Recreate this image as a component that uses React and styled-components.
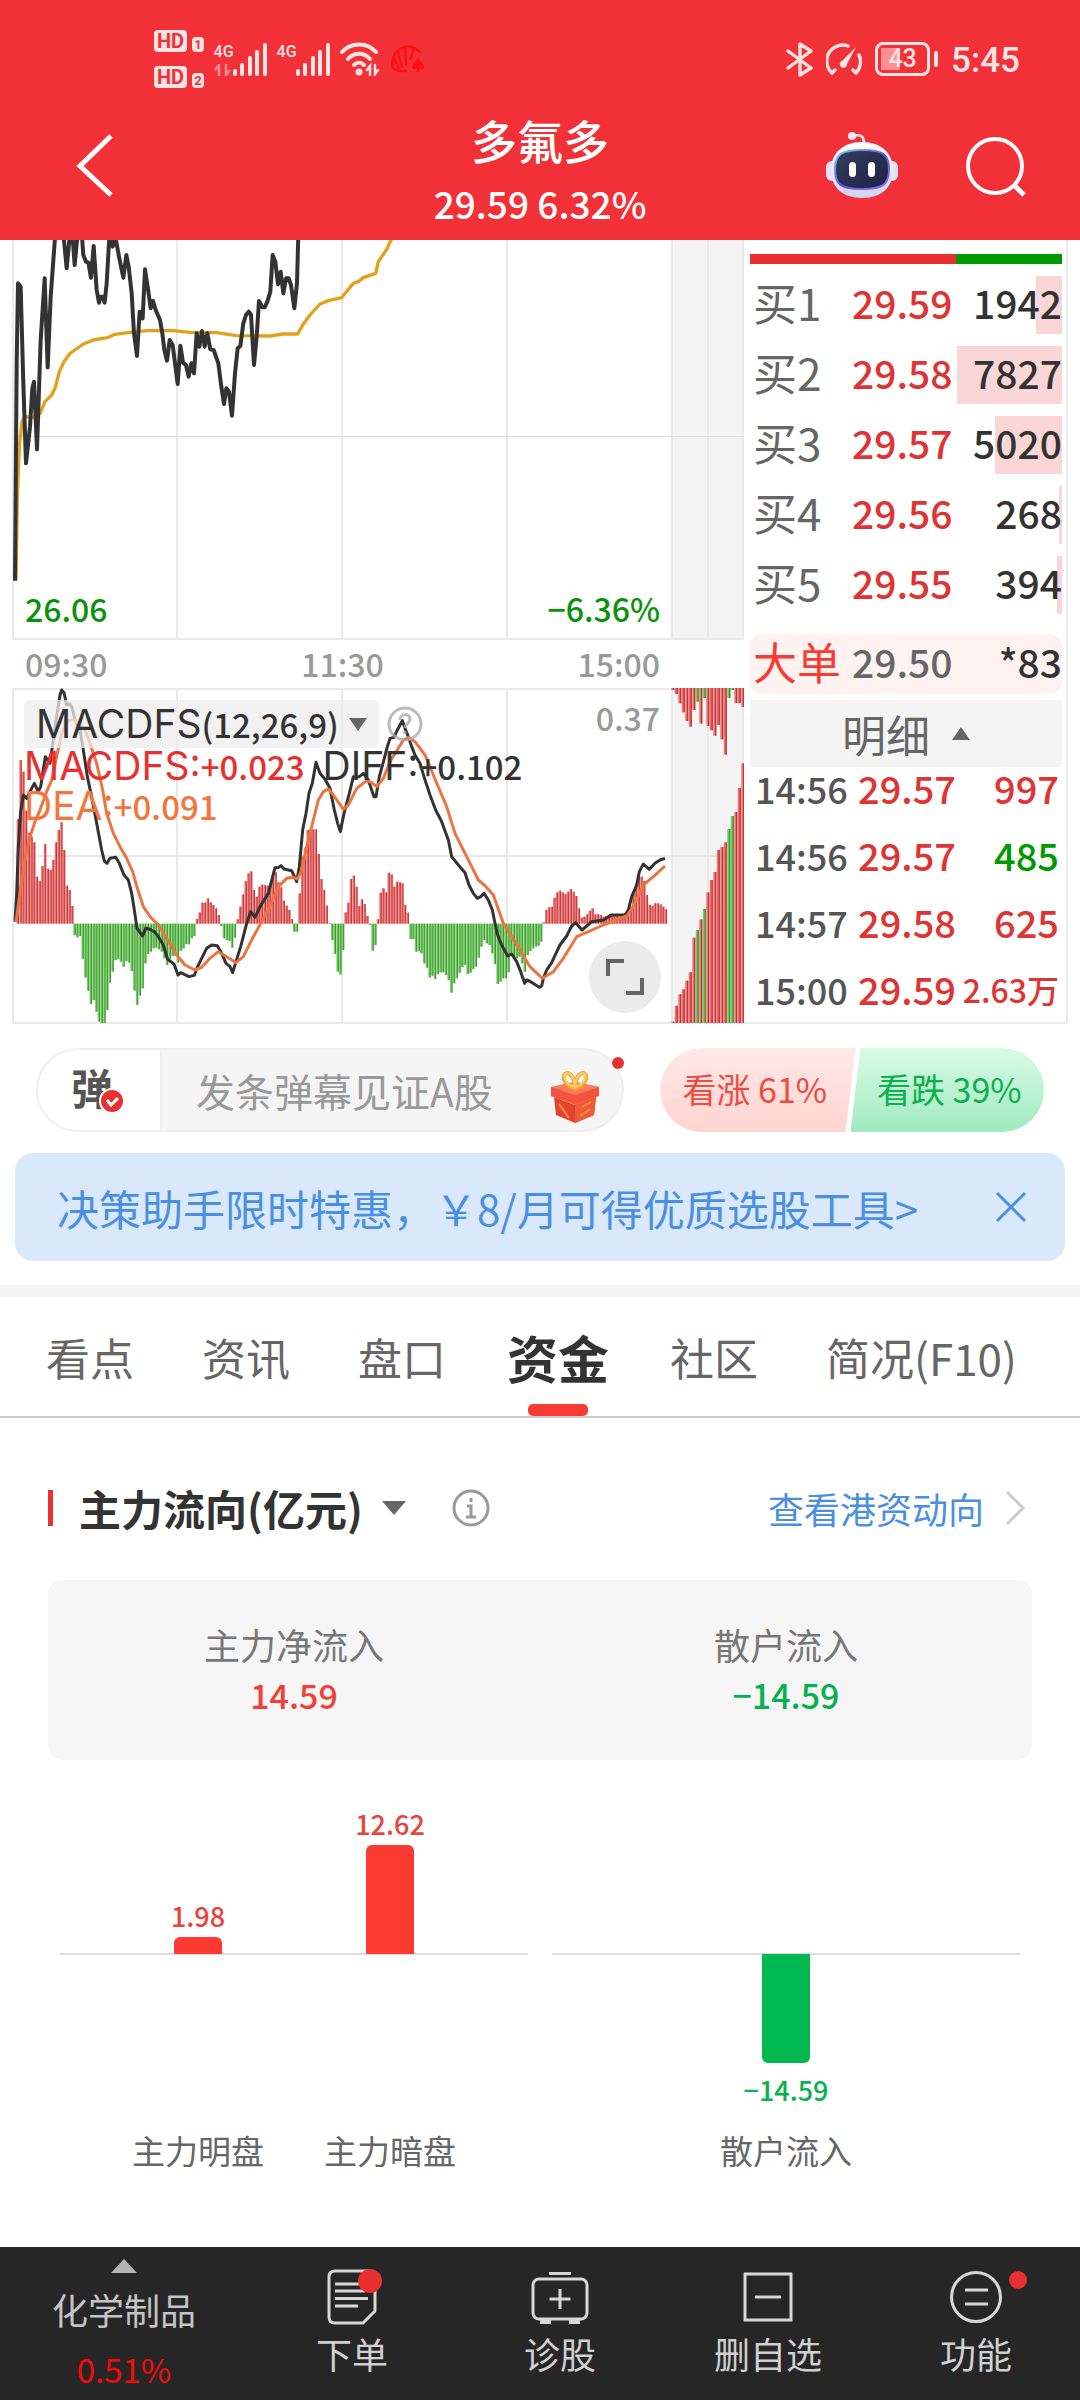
import React from "react";
import styled, { createGlobalStyle } from "styled-components";

const RED = "#e93030";
const GREEN = "#009900";
const NUM = `"Noto Sans CJK SC", "Noto Sans", sans-serif`;

const Global = createGlobalStyle`
  * { box-sizing: border-box; }
  body { margin: 0; background: #fff; }
  button, input { font: inherit; color: inherit; border: 0; background: none; padding: 0; margin: 0; }
  button { cursor: pointer; }
  a { text-decoration: none; }
  svg { display: block; }
  h1, h2, p { margin: 0; font-weight: inherit; font-size: inherit; }
`;

const Page = styled.div`
  min-height: 100vh;
  display: flex;
  flex-direction: column;
  font-family: ${NUM};
  color: #333;
`;

/* ---------- header ---------- */
const Header = styled.header`
  background: #f23038;
  color: #fff;
`;
const StatusBar = styled.div`
  display: flex;
  justify-content: space-between;
  align-items: center;
  height: 112px;
  padding: 6px 60px 0 154px;
  color: #ffe4e4;
`;
const StatusGroup = styled.div`
  display: flex;
  align-items: center;
  gap: ${(p) => p.$gap}px;
`;
const HdStack = styled.div`
  display: flex;
  flex-direction: column;
  gap: 14px;
`;
const HdRow = styled.div`
  display: flex;
  align-items: flex-end;
  gap: 5px;
`;
const HdBox = styled.span`
  background: #ffe4e4;
  color: #f23038;
  border-radius: 4px;
  font: 700 ${(p) => p.$size}px/${(p) => p.$size + 2}px Roboto, sans-serif;
  padding: 0 ${(p) => (p.$size > 15 ? 3 : 2)}px;
`;
const Signal = styled.div`
  display: grid;
  grid-template-columns: 19px 34px;
  align-items: end;
`;
const SignalKind = styled.div`
  display: flex;
  flex-direction: column;
  justify-content: space-between;
  align-self: stretch;
  font: 500 16px/18px Roboto, sans-serif;
`;
const Clock = styled.time`
  font: 500 35px/40px Roboto, sans-serif;
  padding-top: 3px;
`;
const BatteryBox = styled.div`
  display: flex;
  align-items: center;
  gap: 4px;
  &::after { content: ""; width: 4px; height: 16px; border-radius: 2px; background: #ffe4e4; }
`;
const BatteryBody = styled.div`
  width: 55px;
  height: 34px;
  border: 3px solid #ffe4e4;
  border-radius: 8px;
  text-align: center;
  font: 500 25px/28px Roboto, sans-serif;
  background: linear-gradient(90deg, #ff8f93 45%, transparent 45%) 3px 3px / 43px 22px no-repeat;
`;
const TitleBar = styled.div`
  display: grid;
  grid-template: 100% / 1fr auto 1fr;
  align-items: center;
  height: 128px;
  padding: 0 52px 22px;
`;
const TitleText = styled.div`
  display: flex;
  flex-direction: column;
  align-items: center;
  align-self: start;
`;
const StockName = styled.h1`
  font-size: 46px;
  font-weight: 500;
  line-height: 54px;
`;
const StockQuote = styled.p`
  font-size: 37px;
  font-weight: 500;
  line-height: 74px;
`;
const Actions = styled.div`
  display: flex;
  justify-content: flex-end;
  align-items: center;
  gap: 64px;
`;
const IconButton = styled.button`
  display: flex;
  justify-content: center;
  align-items: center;
`;
const BackButton = styled(IconButton)`
  justify-self: start;
  padding-left: 22px;
`;

/* ---------- market panel ---------- */
const Market = styled.section`
  display: grid;
  grid-template-columns: 732fr 324fr;
  padding: 0 12px;
`;
const ChartColumn = styled.div`
  min-width: 0;
`;
const Plot = styled.div`
  position: relative;
  svg { width: 100%; height: auto; }
`;
const PlotLabel = styled.span`
  position: absolute;
  ${(p) => (p.$right ? "right: 84px;" : "left: 13px;")}
  ${(p) => (p.$top ? "top: 5px;" : "bottom: 8px;")}
  font-size: 32px;
  line-height: 48px;
  font-weight: 500;
  color: ${(p) => p.$color};
`;
const TimeAxis = styled.div`
  display: flex;
  justify-content: space-between;
  padding: 0 84px 2px 13px;
  font-size: 32px;
  font-weight: 500;
  line-height: 46px;
  color: #999;
`;
const Indicators = styled.div`
  position: absolute;
  top: 12px;
  left: 12px;
  font-size: 33px;
  font-weight: 500;
  line-height: 36px;
`;
const IndicatorHead = styled.div`
  display: flex;
  align-items: center;
  gap: 8px;
  height: 48px;
`;
const IndicatorPick = styled.button`
  display: flex;
  align-items: center;
  gap: 10px;
  height: 48px;
  padding: 0 12px;
  border-radius: 6px;
  background: rgba(238, 238, 238, 0.75);
`;
const IndicatorName = styled.span`
  display: flex;
`;
const Latin = styled.span`
  font-family: Inter, Roboto, sans-serif;
  font-weight: 400;
  font-size: 39px;
`;
const ReadingRow = styled.div`
  display: flex;
  gap: 18px;
  margin-bottom: 4px;
  height: 36px;
`;
const Reading = styled.span`
  display: flex;
  color: ${(p) => p.$color};
`;
const Expand = styled.button`
  position: absolute;
  right: 83px;
  bottom: 11px;
  width: 72px;
  height: 72px;
  border-radius: 50%;
  background: #ebebeb;
  display: grid;
  place-items: center;
  svg { width: 38px; }
`;

const Book = styled.div`
  border: solid #ececec;
  border-width: 0 2px 2px 0;
  padding: 14px 4px 0 6px;
  min-width: 0;
`;
const Ratio = styled.div`
  height: 10px;
  margin-bottom: 6px;
  background: linear-gradient(90deg, ${RED} 66%, ${GREEN} 66%);
`;
const BookTable = styled.table`
  width: 100%;
  border-collapse: collapse;
  table-layout: fixed;
  td { padding: 0; white-space: nowrap; }
`;
const BidRow = styled.tr`
  height: 70px;
  font-size: 39px;
  line-height: 58px;
  && td { padding-bottom: 6px; }
`;
const Label = styled.td`
  width: 102px;
  text-indent: 3px;
  font-size: 44px;
  color: #666;
`;
const Price = styled.td`
  width: 102px;
  color: #df3434;
  font-weight: 500;
`;
const Volume = styled.td`
  text-align: right;
  font-weight: 500;
  background: linear-gradient(#fad6d6, #fad6d6) right 6px / ${(p) => p.$bar || 0}px 58px no-repeat;
`;
const BigOrder = styled.div`
  display: grid;
  grid-template-columns: 102px 102px 1fr;
  margin-top: 14px;
  height: 60px;
  line-height: 54px;
  border-radius: 12px;
  background: #fff3f2;
  font-size: 44px;
  text-indent: 3px;
  color: #fa3b32;
`;
const BigPrice = styled.span`
  color: #666;
  text-indent: 0;
  font-size: 39px;
  font-weight: 500;
`;
const BigVolume = styled.span`
  color: #333;
  font-size: 39px;
  font-weight: 500;
  text-align: right;
`;
const DetailHead = styled.button`
  display: flex;
  width: 100%;
  height: 67px;
  margin-top: 6px;
  align-items: center;
  justify-content: center;
  gap: 22px;
  background: #f4f4f4;
  color: #666;
  font-size: 44px;
  line-height: 60px;
`;
const TradeRow = styled.tr`
  font-size: 38px;
  line-height: 42px;
  && td { padding-bottom: 25px; }
  &&:last-child td { padding-bottom: 12px; }
`;
const TradeTime = styled.td`
  width: 108px;
  text-indent: 5px;
  color: #555;
  font-size: 36px;
  font-weight: 500;
`;
const TradeVolume = styled.td`
  text-align: right;
  font-weight: 500;
  font-size: ${(p) => (p.$small ? 32 : 38)}px;
  color: ${(p) => (p.$down ? GREEN : "#df3434")};
  && { padding-right: 3px; }
`;

/* ---------- comment + vote ---------- */
const SocialRow = styled.section`
  display: flex;
  gap: 36px;
  padding: 24px 36px 21px;
  height: 129px;
`;
const CommentBox = styled.div`
  position: relative;
  flex: 588 588 588px;
  min-width: 0;
  display: flex;
  border: 2px solid #eee;
  border-radius: 42px;
  background: #f5f5f5;
`;
const BulletToggle = styled.button`
  position: relative;
  width: 124px;
  border-right: 2px solid #eee;
  border-radius: 40px 0 0 40px;
  background: #fff;
  color: #555;
  font-size: 42px;
  font-weight: 700;
  line-height: 74px;
  padding: 0 14px 6px 0;
  svg { position: absolute; left: 61px; top: 38px; }
`;
const CommentInput = styled.input`
  flex: 1;
  width: 0;
  min-width: 0;
  padding-left: 34px;
  font-size: 39px;
  outline: 0;
  &::placeholder { color: #999; opacity: 1; }
`;
const GiftButton = styled.button`
  padding: 14px 22px 0 0;
`;
const Dot = styled.i`
  position: absolute;
  top: ${(p) => p.$top}px;
  right: ${(p) => p.$right}px;
  width: ${(p) => p.$size}px;
  height: ${(p) => p.$size}px;
  border-radius: 50%;
  background: ${RED};
`;
const Votes = styled.div`
  flex: 384 384 384px;
  display: flex;
  border-radius: 42px;
  overflow: hidden;
`;
const Vote = styled.button`
  flex: 1;
  white-space: nowrap;
  font-size: 34px;
  color: ${(p) => (p.$up ? "#ee4b41" : "#0cb04d")};
  background: ${(p) => (p.$up ? "linear-gradient(#ffe9e8, #ffd4cf)" : "linear-gradient(#d9fae6, #9feac0)")};
  clip-path: ${(p) =>
    p.$up ? "polygon(0 0, 100% 0, calc(100% - 10px) 100%, 0 100%)" : "polygon(10px 0, 100% 0, 100% 100%, 0 100%)"};
  margin-right: ${(p) => (p.$up ? "-5px" : 0)};
  padding: ${(p) => (p.$up ? "0 6px 4px 0" : "0 0 4px 4px")};
`;
const Banner = styled.div`
  display: flex;
  align-items: center;
  justify-content: space-between;
  height: 108px;
  margin: 0 15px 24px;
  padding: 0 38px 0 42px;
  border-radius: 18px;
  background: #dae8fc;
`;
const BannerLink = styled.a`
  color: #4a90e2;
  font-size: 42px;
  white-space: nowrap;
`;

/* ---------- tabs ---------- */
const Tabs = styled.nav`
  display: flex;
  border-top: 12px solid #f4f4f4;
  border-bottom: 2px solid #ccc;
  height: 133px;
  padding-left: 12px;
`;
const Tab = styled.button`
  position: relative;
  padding: 0 ${(p) => (p.$active ? 27 : 34)}px;
  font-size: ${(p) => (p.$active ? 51 : 44)}px;
  font-weight: ${(p) => (p.$active ? 700 : 400)};
  color: ${(p) => (p.$active ? "#333" : "#666")};
  white-space: nowrap;
  &::after {
    content: "";
    display: ${(p) => (p.$active ? "block" : "none")};
    position: absolute;
    left: calc(50% - 30px);
    bottom: 0;
    width: 60px;
    height: 12px;
    border-radius: 5px;
    background: #fa3b32;
  }
`;

/* ---------- fund flow ---------- */
const Flow = styled.section`
  padding: 60px 48px 40px;
`;
const FlowHead = styled.div`
  display: flex;
  align-items: center;
  height: 60px;
`;
const FlowTitle = styled.h2`
  display: flex;
  align-items: center;
  gap: 26px;
  font-size: 42px;
  line-height: 60px;
  font-weight: 700;
  &::before { content: ""; width: 5px; height: 36px; background: ${RED}; }
`;
const HeadButton = styled(IconButton)`
  margin-left: ${(p) => p.$gap}px;
`;
const MoreLink = styled.a`
  display: flex;
  align-items: center;
  gap: 20px;
  margin-left: auto;
  padding-right: 6px;
  font-size: 36px;
  color: #4a90e2;
`;
const Summary = styled.dl`
  display: grid;
  grid-template-columns: 1fr 1fr;
  margin: 42px 0 0;
  padding: 37px 0 36px;
  height: 180px;
  border-radius: 14px;
  background: #f6f6f6;
  text-align: center;
`;
const SummaryName = styled.dt`
  font-size: 36px;
  line-height: 54px;
  color: #777;
`;
const SummaryValue = styled.dd`
  margin: 0;
  font-size: 34px;
  line-height: 48px;
  font-weight: 500;
  color: ${(p) => (p.$down ? "#07b151" : "#f33f37")};
`;
const BarCharts = styled.div`
  display: grid;
  grid-template-columns: 1fr 1fr;
  gap: 24px;
  padding: 40px 12px 0;
`;
const BarGroup = styled.div`
  display: flex;
  justify-content: center;
  background: linear-gradient(#ddd, #ddd) 0 153px / 100% 2px no-repeat;
`;
const BarColumn = styled.div`
  display: flex;
  flex-direction: column;
  align-items: center;
  flex: 0 1 192px;
`;
const BarArea = styled.div`
  display: flex;
  flex-direction: column;
  align-items: center;
  justify-content: ${(p) => (p.$below ? "flex-start" : "flex-end")};
  height: ${(p) => (p.$below ? 168 : 154)}px;
`;
const Bar = styled.div`
  width: 48px;
  background: ${(p) => (p.$down ? "#00b850" : "#fd3a32")};
  border-radius: ${(p) => (p.$down ? "0 0 6px 6px" : "6px 6px 0 0")};
`;
const BarValue = styled.span`
  font-size: 27px;
  line-height: 42px;
  padding-top: ${(p) => (p.$down ? 6 : 0)}px;
  font-weight: 500;
  color: ${(p) => (p.$down ? "#07b151" : "#e8443b")};
`;
const BarName = styled.span`
  font-size: 33px;
  line-height: 56px;
  color: #666;
`;

/* ---------- bottom bar ---------- */
const BottomBar = styled.nav`
  display: grid;
  grid-template-columns: 248fr 208fr 208fr 208fr 208fr;
  height: 153px;
  margin-top: auto;
  background: #262626;
  color: #d0d0d0;
  font-size: 36px;
`;
const Sector = styled.button`
  display: flex;
  flex-direction: column;
  align-items: center;
  padding-top: 12px;
  line-height: 60px;
  color: #c4c4c4;
  svg { margin-bottom: 6px; }
`;
const Change = styled.span`
  font-size: 33px;
  color: #f50a0a;
`;
const NavItem = styled.button`
  position: relative;
  display: flex;
  flex-direction: column;
  align-items: center;
  padding-top: 22px;
  line-height: 56px;
`;

/* ---------- data ---------- */
const priceLine =
  "45,1052 50,400 54,160 62,170 70,460 78,700 90,590 97,475 102,455 111,658 122,330 134,145 143,412 152,200 166,10 190,10 200,115 210,10 217,10 224,105 233,10 246,20 250,75 258,95 265,98 273,143 281,48 290,180 297,218 303,200 308,200 314,218 320,160 328,20 338,50 346,20 358,85 370,143 379,75 386,110 395,190 402,310 411,378 419,245 428,265 435,118 443,170 452,235 459,213 467,240 480,270 487,310 493,360 501,392 509,330 518,345 533,462 541,347 549,398 558,405 566,440 574,400 582,430 590,310 598,350 606,303 614,350 622,310 631,358 641,360 655,400 664,470 672,522 679,475 687,485 696,557 705,430 713,355 721,348 730,280 738,255 746,245 753,255 762,405 770,320 777,213 787,232 794,232 802,215 811,185 818,75 826,95 834,163 842,125 850,190 858,145 866,145 873,165 883,235 891,160 895,10";
const averageLine =
  "48,1050 52,800 58,650 66,575 75,560 100,562 120,550 135,515 155,495 165,475 178,425 192,395 210,370 250,342 280,330 322,323 345,313 390,307 440,302 520,302 570,307 650,308 710,317 810,318 850,312 893,312 908,285 930,255 960,222 985,212 1025,203 1045,178 1060,160 1075,155 1090,143 1127,130 1135,95 1160,58 1178,20";
const diffLine =
  "45,725 50,640 55,500 62,395 70,345 80,355 95,325 103,310 115,335 122,320 136,230 150,250 160,180 170,110 180,45 185,30 192,38 200,75 210,72 217,85 225,120 240,150 250,210 262,290 275,350 290,430 305,510 313,543 321,550 330,535 347,532 358,550 372,585 385,600 395,640 403,690 411,745 428,768 437,745 450,748 463,755 475,770 490,795 503,838 522,852 534,885 542,878 567,890 583,886 592,862 605,835 620,805 635,795 652,797 665,820 678,850 690,860 698,878 708,845 722,800 740,730 752,695 765,712 780,680 805,640 825,563 835,563 843,557 852,567 875,572 890,605 898,560 908,450 918,400 927,340 937,310 948,247 960,280 975,298 990,325 1003,390 1013,430 1021,455 1032,400 1048,340 1060,290 1078,290 1090,280 1105,300 1115,330 1122,350 1128,350 1138,290 1153,235 1162,200 1170,175 1182,172 1192,150 1207,122 1215,145 1225,170 1235,200 1245,225 1260,250 1272,290 1290,345 1307,390 1325,425 1345,480 1355,530 1375,555 1395,578 1407,615 1420,640 1432,655 1442,650 1452,640 1465,660 1477,690 1487,740 1493,765 1505,795 1523,828 1535,822 1550,845 1562,875 1574,910 1580,900 1588,903 1618,922 1625,918 1630,895 1640,870 1655,848 1668,820 1680,795 1700,768 1715,738 1727,728 1746,750 1760,738 1775,725 1790,723 1810,720 1835,705 1875,705 1885,690 1895,650 1910,615 1918,575 1930,552 1948,568 1965,550 1980,540 1995,535";
const deaLine =
  "48,725 60,640 75,540 90,470 105,425 118,395 140,335 155,300 170,230 185,160 200,125 220,118 235,130 255,150 270,190 290,250 308,330 320,400 340,460 360,500 380,535 398,575 412,625 430,680 450,710 475,735 500,775 530,825 555,855 585,870 605,862 630,835 655,815 680,830 708,848 730,830 760,770 785,725 810,680 835,620 860,595 880,592 893,597 905,570 920,500 940,420 955,360 970,335 985,327 1000,345 1030,388 1045,375 1070,325 1100,302 1115,308 1130,320 1150,295 1170,245 1210,180 1225,172 1245,185 1275,225 1300,285 1340,380 1365,460 1400,530 1435,600 1455,617 1480,645 1510,730 1560,810 1590,860 1627,895 1660,875 1690,835 1730,770 1760,757 1810,735 1880,708 1900,680 1930,615 1960,590 1995,558";

/* histogram runs: [first x, bar ends]; the zero line is y = 731 */
const macdRuns = [
  [54, [417, 240, 275, 392, 458, 470, 487, 590, 603, 558, 492, 566, 570, 540, 487, 450, 427, 510, 617, 630, 678]],
  [224, [765, 772, 768, 837, 893, 932, 972, 960, 995, 1025, 1029, 1029, 990, 908, 875, 840, 837, 845, 860, 843, 848, 873, 932, 975, 947, 925, 850, 822, 815, 805, 803, 808, 815, 835, 855, 838, 828, 828, 848, 812, 805, 792, 793, 775, 768]],
  [591, [717, 697, 668, 668, 655, 667, 675, 685, 705]],
  [664, [738, 775, 780, 783, 803, 773]],
  [713, [718, 680, 643, 603, 580, 574, 630, 650, 620, 614, 615, 617, 617, 590, 577, 607, 622, 662, 677, 690, 717]],
  [883, [755, 755]],
  [899, [640, 530, 503, 450, 448, 448, 448, 522, 597, 630, 677, 729]],
  [997, [780, 822, 875, 883, 810]],
  [1037, [697, 668, 597, 587, 620, 678, 658, 672, 708]],
  [1110, [735, 812, 795]],
  [1134, [718, 638, 625, 637, 578, 583, 620, 605, 607, 610, 675, 698]],
  [1232, [777, 777, 815, 813, 820, 850, 863, 893, 887, 897, 882, 877, 877, 885, 900, 938, 910, 895, 878, 862, 855, 882, 878, 867, 860, 833, 800, 780, 790, 795, 820, 852, 912, 905, 895, 895, 877, 825, 830, 835, 830, 850, 875, 825, 813, 805, 800, 797, 785]],
  [1631, [727, 690, 682, 680, 653, 637, 632, 637, 642, 635, 627, 635, 648, 685, 713, 710, 703, 692, 685, 703, 703, 705, 710, 708, 703, 703, 703, 705, 710, 710, 700, 695, 680, 640, 610, 590, 590, 603, 645, 675, 677, 670, 670, 673, 680, 688]],
];
const auctionTop = [30, 42, 70, 97, 123, 140, 90, -65, 131, -54, 138, 151, 167, 135, 178, 224, -54, -30, 69, 69, 81];
const auctionBottom = [1025, 977, 943, 928, 902, 877, 773, -750, 718, -687, 637, 600, 576, 510, 501, 487, -447, -408, 396, 324, 250];

const bids = [
  ["买1", "29.59", "1942", 26],
  ["买2", "29.58", "7827", 105],
  ["买3", "29.57", "5020", 67],
  ["买4", "29.56", "268", 3],
  ["买5", "29.55", "394", 5],
];
const trades = [
  ["14:56", "29.57", "997"],
  ["14:56", "29.57", "485", true],
  ["14:57", "29.58", "625"],
  ["15:00", "29.59", "2.63万"],
];

/* ---------- drawings ---------- */
const Stick = ({ x, y1, y2, up, w = 8 }) => {
  const top = Math.min(y1, y2);
  const h = Math.abs(y2 - y1);
  return (
    <>
      <rect x={x - w / 2} y={top} width={w - 1} height={h} fill={up ? "#f76c6c" : "#74ca66"} />
      <rect x={x} y={top} width={w / 2 - 1} height={h} fill={up ? "#b23c3c" : "#3b952b"} />
    </>
  );
};

const Grid = ({ top, mid, bottom }) => (
  <>
    <rect x="2012" y={top} width="220" height={bottom - top} fill="#f4f4f4" />
    <g stroke="#e9e9e9" strokeWidth="6">
      {[39, 531, 1026, 1521, 2016, 2124, 2229].map((x) => (
        <path key={x} d={`M${x} ${top}V${bottom}`} />
      ))}
      <path d={`M36 ${bottom}H2232`} />
    </g>
    <path d={`M36 ${mid}H2232`} stroke="#e2e2e2" strokeWidth="4" />
  </>
);

const PriceChart = () => (
  <svg viewBox="36 30 2196 1200" fill="none" strokeLinejoin="round">
    <Grid top={0} mid={619} bottom={1227} />
    <polyline points={averageLine} stroke="#e2a01c" strokeWidth="10" />
    <polyline points={priceLine} stroke="#333" strokeWidth="12" />
  </svg>
);

const MacdChart = () => (
  <svg viewBox="36 24 2196 1008" fill="none" strokeLinejoin="round">
    <Grid top={27} mid={528} bottom={1029} />
    <path d="M36 27H2232" stroke="#e9e9e9" strokeWidth="6" />
    {macdRuns.map(([start, ends]) =>
      ends.map((y, i) => <Stick key={start + "-" + i} x={start + i * 8.16} y1={731} y2={y} up={y < 731} />)
    )}
    {auctionTop.map((y, i) => (
      <Stick key={i} x={2019 + i * 10.5} y1={24} y2={Math.abs(y)} up={y > 0} w={10} />
    ))}
    {auctionBottom.map((y, i) => (
      <Stick key={i} x={2019 + i * 10.5} y1={1029} y2={Math.abs(y)} up={y > 0} w={10} />
    ))}
    <polyline points={diffLine} stroke="#333" strokeWidth="9" />
    <polyline points={deaLine} stroke="#ec7440" strokeWidth="9" />
  </svg>
);

const SignalBars = () => (
  <svg width="34" height="33" viewBox="0 0 34 33" fill="#ffe4e4">
    <rect x="0" y="26" width="4" height="7" rx="2" />
    <rect x="7" y="20" width="4" height="13" rx="2" />
    <rect x="15" y="13" width="4" height="20" rx="2" />
    <rect x="22" y="7" width="4" height="26" rx="2" />
    <rect x="30" y="0" width="4" height="33" rx="2" />
  </svg>
);

const Transfer = () => (
  <svg width="17" height="12" viewBox="0 0 17 12" fill="none" stroke="#ff8f93" strokeWidth="2.4">
    <path d="M5 12V1L1 6M12 0v11l4-5" />
  </svg>
);

const Wifi = () => (
  <svg width="40" height="34" viewBox="0 0 40 34" fill="none" stroke="#ffe4e4" strokeWidth="4" strokeLinecap="round">
    <path d="M2 10C11 0 27 0 36 10" />
    <path d="M8 17c6-7 16-7 22 0" />
    <path d="M14 23c3-3 7-3 10 0" />
    <circle cx="19" cy="30" r="1.5" />
    <path d="M30 33v-9l-3 4M35 23v9l3-4" strokeWidth="2.5" />
  </svg>
);

const Shell = () => (
  <svg width="36" height="28" viewBox="0 0 36 28" fill="none" stroke="#ff1010" strokeWidth="2.4">
    <path d="M3 23C0 14 6 3 16 2c6-1 11 1 15 6M3 23l6 3h8M9 24 4 13M12 22 8 7M16 20 15 2M20 15l4-11" />
    <path d="M28 13c-3 4-6 6-6 9 0 3 4 3 5 1l-1 4h4l-1-4c1 2 5 2 5-1 0-3-3-5-6-9z" fill="#ff1010" stroke="none" />
  </svg>
);

const Bluetooth = () => (
  <svg width="27" height="35" viewBox="0 0 27 35" fill="none" stroke="#ffe4e4" strokeWidth="3.4" strokeLinejoin="round" strokeLinecap="round">
    <path d="M2 9l23 17-11 7V2l11 7L2 26" />
  </svg>
);

const Gauge = () => (
  <svg width="36" height="33" viewBox="0 0 36 33" fill="none" stroke="#ffe4e4" strokeWidth="3.4" strokeLinecap="round">
    <path d="M6 30A16 16 0 0 1 22 3M33 12a16 16 0 0 1-3 18M6 30l3-3M30 30l-3-3" />
    <path d="M30 4 21 21a3.600 3.600 0 1 1-5-3z" fill="#ffe4e4" stroke="none" />
  </svg>
);

const Robot = () => (
  <svg width="72" height="68" viewBox="0 0 72 68" fill="none">
    <defs>
      <linearGradient id="shell" x1="0" y1="0" x2="0" y2="1">
        <stop offset="0" stopColor="#fff" />
        <stop offset="1" stopColor="#d2d2f0" />
      </linearGradient>
      <linearGradient id="face" x1="0" y1="0" x2="1" y2="1">
        <stop offset="0" stopColor="#353d5c" />
        <stop offset="1" stopColor="#1b2244" />
      </linearGradient>
      <linearGradient id="rim" x1="0" y1="0" x2="1" y2="1">
        <stop offset="0" stopColor="#7fd0f0" />
        <stop offset=".5" stopColor="#6a4fe0" />
        <stop offset="1" stopColor="#8a6cf0" />
      </linearGradient>
    </defs>
    <path d="M27 5c7-2 11 0 11 7" stroke="#f3ecf8" strokeWidth="2.6" />
    <circle cx="26" cy="5" r="4" fill="#eee6f6" />
    <rect x="0" y="30" width="72" height="20" rx="6" fill="#e2e2f6" />
    <path d="M36 11c19 0 31 11 31 28S56 67 36 67 5 56 5 39 17 11 36 11z" fill="url(#shell)" />
    <path d="M36 19c20 0 27 4 27 19s-5 20-27 20-27-5-27-20 7-19 27-19z" fill="url(#face)" stroke="url(#rim)" strokeWidth="2" />
    <rect x="23" y="31" width="7" height="15" rx="3.5" fill="#fff" />
    <rect x="42" y="31" width="7" height="15" rx="3.5" fill="#fff" />
  </svg>
);

const Gift = () => (
  <svg width="50" height="54" viewBox="0 0 50 54" fill="none">
    <path d="M4 27l21 8 21-8-2 18-19 8-19-8z" fill="#e0452c" />
    <path d="M25 35v18l19-8 2-18z" fill="#f0583a" />
    <path d="M1 17l24-5 24 5v9l-24 9-24-9z" fill="#f2553d" />
    <path d="M1 17l24 8 24-8-24-5z" fill="#ff7a5c" />
    <path d="M9 34l10 14M32 37l9-5M30 46l10-7" stroke="#ff8a50" strokeWidth="2" />
    <path d="M25 18C13 15 11 4 17 3c5 0 8 8 8 15zm0 0C37 15 39 4 33 3c-5 0-8 8-8 15z" stroke="#f0a92c" strokeWidth="4" />
    <path d="M25 17C14 14 12 4 17 3c5 0 8 8 8 14zm0 0C36 14 38 4 33 3c-5 0-8 8-8 14z" stroke="#fbd069" strokeWidth="2" />
  </svg>
);

const Triangle = ({ w, h, up, color = "#666" }) => (
  <svg width={w} height={h} viewBox="0 0 10 10" preserveAspectRatio="none" fill={color}>
    <path d={up ? "M5 0l5 10H0z" : "M0 0h10L5 10z"} />
  </svg>
);

const OrderIcon = () => (
  <svg width="50" height="56" viewBox="0 0 50 56" fill="none" stroke="#d8d8d8" strokeWidth="3">
    <path d="M8 2h34q6 0 6 6v34L36 54H8q-6 0-6-6V8q0-6 6-6z" />
    <path d="M8 15h26M8 22h30M8 29.500h33M8 37h23" />
  </svg>
);
const DiagnoseIcon = () => (
  <svg width="58" height="56" viewBox="0 0 58 56" fill="none" stroke="#d8d8d8" strokeWidth="3">
    <path d="M18 4.500h22" />
    <rect x="2" y="10" width="54" height="40" rx="6" />
    <path d="M29 20v20M18.500 30h21" />
    <path d="M9 53h11M38 53h11" strokeWidth="4" />
  </svg>
);
const RemoveIcon = () => (
  <svg width="50" height="56" viewBox="0 0 50 56" fill="none" stroke="#d8d8d8" strokeWidth="3">
    <path d="M2 5h46v46H2zM12 28h26" />
  </svg>
);
const FunctionIcon = () => (
  <svg width="52" height="56" viewBox="0 0 52 56" fill="none" stroke="#d8d8d8" strokeWidth="3">
    <circle cx="26" cy="28" r="24.500" />
    <path d="M15 21h23M15 35h23" />
  </svg>
);

const navItems = [
  ["下单", OrderIcon, [22, 74, 24]],
  ["诊股", DiagnoseIcon],
  ["删自选", RemoveIcon],
  ["功能", FunctionIcon, [24, 53, 18]],
];
const tabs = ["看点", "资讯", "盘口", "资金", "社区", "简况(F10)"];

export default function App() {
  return (
    <Page>
      <Global />
      <Header>
        <StatusBar>
          <StatusGroup $gap={10}>
            <HdStack>
              {[1, 2].map((n) => (
                <HdRow key={n}>
                  <HdBox $size={20}>HD</HdBox>
                  <HdBox $size={13}>{n}</HdBox>
                </HdRow>
              ))}
            </HdStack>
            <Signal><SignalKind>4G<Transfer /></SignalKind><SignalBars /></Signal>
            <Signal><SignalKind>4G</SignalKind><SignalBars /></Signal>
            <Wifi />
            <Shell />
          </StatusGroup>
          <StatusGroup $gap={13}>
            <Bluetooth />
            <Gauge />
            <BatteryBox><BatteryBody>43</BatteryBody></BatteryBox>
            <Clock>5:45</Clock>
          </StatusGroup>
        </StatusBar>
        <TitleBar>
          <BackButton aria-label="返回">
            <svg width="40" height="68" viewBox="0 0 40 68" fill="none" stroke="#fff" strokeWidth="5">
              <path d="M37 5 6 35l31 29" />
            </svg>
          </BackButton>
          <TitleText>
            <StockName>多氟多</StockName>
            <StockQuote>29.59 6.32%</StockQuote>
          </TitleText>
          <Actions>
            <IconButton aria-label="智能助手"><Robot /></IconButton>
            <IconButton aria-label="搜索">
              <svg width="66" height="66" viewBox="0 0 66 66" fill="none" stroke="#fff" strokeWidth="4">
                <circle cx="33" cy="34" r="27" />
                <path d="M52 53l10 10" strokeWidth="5" />
              </svg>
            </IconButton>
          </Actions>
        </TitleBar>
      </Header>

      <Market>
        <ChartColumn>
          <Plot>
            <PriceChart />
            <PlotLabel $color="#0a930a">26.06</PlotLabel>
            <PlotLabel $color="#0a930a" $right>−6.36%</PlotLabel>
          </Plot>
          <TimeAxis>
            <span>09:30</span>
            <span>11:30</span>
            <span>15:00</span>
          </TimeAxis>
          <Plot>
            <MacdChart />
            <Indicators>
              <IndicatorHead>
                <IndicatorPick>
                  <IndicatorName><Latin>MACDFS</Latin>(12,26,9)</IndicatorName>
                  <Triangle w={18} h={13} />
                </IndicatorPick>
                <IconButton aria-label="说明">
                  <svg width="36" height="36" viewBox="0 0 36 36" fill="none" stroke="#aaa" strokeOpacity=".8" strokeWidth="3">
                    <circle cx="18" cy="18" r="16" />
                    <path d="M13 14c0-7 10-7 10-1 0 5-5 4-5 9M18 25v3" />
                  </svg>
                </IconButton>
              </IndicatorHead>
              <ReadingRow>
                <Reading $color={RED}><Latin>MACDFS:</Latin>+0.023</Reading>
                <Reading $color="#333"><Latin>DIFF:</Latin>+0.102</Reading>
              </ReadingRow>
              <ReadingRow>
                <Reading $color="#f5763c"><Latin>DEA:</Latin>+0.091</Reading>
              </ReadingRow>
            </Indicators>
            <PlotLabel $color="#999" $right $top>0.37</PlotLabel>
            <Expand aria-label="全屏">
              <svg viewBox="0 0 38 38" fill="none" stroke="#666" strokeWidth="4">
                <path d="M2 18V3h16M20 35h16V20" />
              </svg>
            </Expand>
          </Plot>
        </ChartColumn>

        <Book>
          <Ratio />
          <BookTable>
            <tbody>
              {bids.map(([name, price, volume, bar]) => (
                <BidRow key={name}>
                  <Label>{name}</Label>
                  <Price>{price}</Price>
                  <Volume $bar={bar}>{volume}</Volume>
                </BidRow>
              ))}
            </tbody>
          </BookTable>
          <BigOrder>
            <span>大单</span>
            <BigPrice>29.50</BigPrice>
            <BigVolume>*83</BigVolume>
          </BigOrder>
          <DetailHead>
            明细
            <Triangle w={18} h={13} up />
          </DetailHead>
          <BookTable>
            <tbody>
              {trades.map(([time, price, volume, down], i) => (
                <TradeRow key={i}>
                  <TradeTime>{time}</TradeTime>
                  <Price>{price}</Price>
                  <TradeVolume $down={down} $small={volume.length > 4}>{volume}</TradeVolume>
                </TradeRow>
              ))}
            </tbody>
          </BookTable>
        </Book>
      </Market>

      <SocialRow>
        <CommentBox>
          <BulletToggle aria-label="弹幕开关">
            弹
            <svg width="26" height="26" viewBox="0 0 26 26" fill="none" stroke="#fff">
              <circle cx="13" cy="13" r="12" fill={RED} strokeWidth="2" />
              <path d="M8 12l4 5 7-7" strokeWidth="3" />
            </svg>
          </BulletToggle>
          <CommentInput aria-label="弹幕" placeholder="发条弹幕见证A股" />
          <GiftButton aria-label="礼物"><Gift /></GiftButton>
          <Dot $top={7} $right={-2} $size={12} />
        </CommentBox>
        <Votes>
          <Vote $up>看涨 61%</Vote>
          <Vote>看跌 39%</Vote>
        </Votes>
      </SocialRow>

      <Banner>
        <BannerLink href="#offer">决策助手限时特惠，￥8/月可得优质选股工具&gt;</BannerLink>
        <IconButton aria-label="关闭">
          <svg width="32" height="32" viewBox="0 0 32 32" fill="none" stroke="#4a90e2" strokeWidth="3">
            <path d="M2 2l28 28M30 2 2 30" />
          </svg>
        </IconButton>
      </Banner>

      <Tabs>
        {tabs.map((t) => (
          <Tab key={t} $active={t === "资金"}>{t}</Tab>
        ))}
      </Tabs>

      <Flow>
        <FlowHead>
          <FlowTitle>主力流向(亿元)</FlowTitle>
          <HeadButton $gap={19} aria-label="切换"><Triangle w={24} h={14} /></HeadButton>
          <HeadButton $gap={46} aria-label="说明">
            <svg width="38" height="38" viewBox="0 0 38 38" fill="none" stroke="#999" strokeWidth="3">
              <circle cx="19" cy="19" r="17" />
              <path d="M15 17h4v11M14 28h10M19 9v4" />
            </svg>
          </HeadButton>
          <MoreLink href="#hk">
            查看港资动向
            <svg width="22" height="38" viewBox="0 0 22 38" fill="none" stroke="#ccc" strokeWidth="3">
              <path d="M3 3l16 16L3 35" />
            </svg>
          </MoreLink>
        </FlowHead>
        <Summary>
          <div>
            <SummaryName>主力净流入</SummaryName>
            <SummaryValue>14.59</SummaryValue>
          </div>
          <div>
            <SummaryName>散户流入</SummaryName>
            <SummaryValue $down>−14.59</SummaryValue>
          </div>
        </Summary>
        <BarCharts>
          <BarGroup>
            {[["主力明盘", "1.98", 17], ["主力暗盘", "12.62", 109]].map(([name, value, h]) => (
              <BarColumn key={name}>
                <BarArea>
                  <BarValue>{value}</BarValue>
                  <Bar style={{ height: h }} />
                </BarArea>
                <BarArea $below />
                <BarName>{name}</BarName>
              </BarColumn>
            ))}
          </BarGroup>
          <BarGroup>
            <BarColumn>
              <BarArea />
              <BarArea $below>
                <Bar $down style={{ height: 109 }} />
                <BarValue $down>−14.59</BarValue>
              </BarArea>
              <BarName>散户流入</BarName>
            </BarColumn>
          </BarGroup>
        </BarCharts>
      </Flow>

      <BottomBar>
        <Sector>
          <Triangle w={26} h={14} up color="#b5b5b5" />
          <span>化学制品</span>
          <Change>0.51%</Change>
        </Sector>
        {navItems.map(([name, Icon, dot]) => (
          <NavItem key={name}>
            <Icon />
            {dot && <Dot $top={dot[0]} $right={dot[1]} $size={dot[2]} />}
            <span>{name}</span>
          </NavItem>
        ))}
      </BottomBar>
    </Page>
  );
}
